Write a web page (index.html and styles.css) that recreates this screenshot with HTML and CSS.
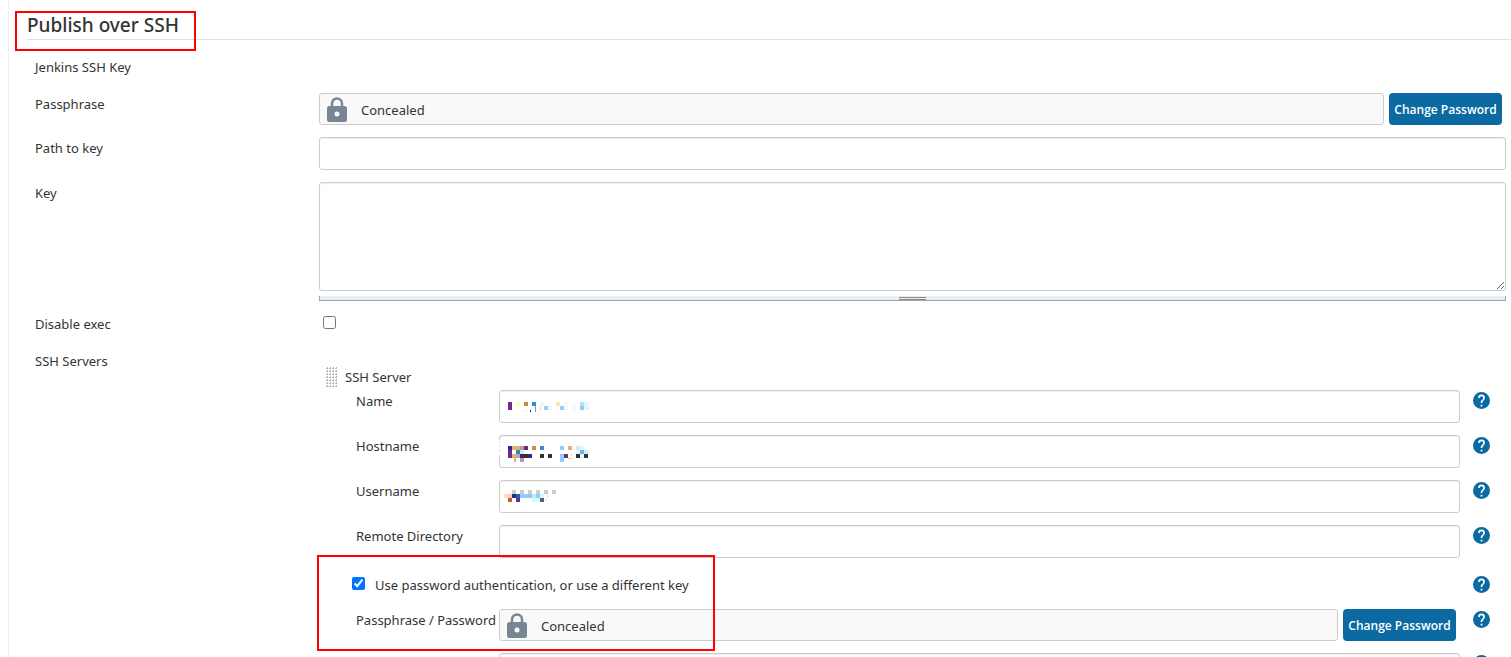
FILE: index.html
```html
<!DOCTYPE html>
<html lang="en">
<head>
    <meta charset="UTF-8">
    <title>Configure System [Jenkins]</title>
    <link rel="stylesheet" href="styles.css">
</head>
<body>
    <!-- Shared icons -->
    <svg class="sprite" aria-hidden="true">
        <symbol id="lock" viewBox="0 0 20 26">
            <path d="M5 10V6.500a5 5 0 0 1 10 0V10" fill="none" stroke="#788594" stroke-width="2.500"/>
            <path fill="#788594" fill-rule="evenodd" d="M2.500 9h15A2.500 2.500 0 0 1 20 11.500v11a2.500 2.500 0 0 1-2.500 2.500h-15A2.500 2.500 0 0 1 0 22.500v-11A2.500 2.500 0 0 1 2.500 9zM10 14.500a2.500 2.500 0 1 0 0 5 2.500 2.500 0 0 0 0-5z"/>
        </symbol>
        <symbol id="help" viewBox="0 0 24 24">
            <path fill="#0b6aa2" d="M12 0a12 12 0 1 0 0 24 12 12 0 0 0 0-24zm1.200 20.400h-2.400V18h2.400v2.400zm2.500-9.300-1.100 1.100c-.9.900-1.400 1.600-1.400 3.400h-2.400V15c0-1.300.5-2.500 1.400-3.400l1.500-1.500c.4-.4.7-1 .7-1.700a2.400 2.400 0 0 0-4.800 0H7.200a4.800 4.800 0 0 1 9.600 0c0 1-.4 2-1.100 2.700z"/>
        </symbol>
    </svg>

    <main class="main-panel">
        <h1 class="section-header">Publish over SSH<span class="highlight highlight-title"></span></h1>

        <form class="form">
            <div class="row">
                <div class="label">Jenkins SSH Key</div>
            </div>
            <div class="row">
                <div class="label">Passphrase</div>
                <div class="secret">
                    <div class="secret-field"><svg class="lock"><use href="#lock"/></svg>Concealed</div>
                    <button type="button" class="change">Change Password</button>
                </div>
            </div>
            <div class="row">
                <label class="label" for="keyPath">Path to key</label>
                <input class="text" type="text" id="keyPath">
            </div>
            <div class="row">
                <label class="label" for="key">Key</label>
                <div class="key-box">
                    <textarea class="text area" id="key"></textarea>
                    <div class="area-handle"><div class="grip"></div></div>
                </div>
            </div>
            <div class="row">
                <label class="label" for="disableExec">Disable exec</label>
                <div><input class="check" type="checkbox" id="disableExec"></div>
            </div>
            <div class="row">
                <div class="label">SSH Servers</div>
                <div class="servers">
                    <div class="server-title">
                        <svg class="drag" width="12" height="21">
                            <pattern id="dots" width="3" height="3" patternUnits="userSpaceOnUse">
                                <path d="M1 0h1v2H0V1h1z" fill="#b4b4b4" shape-rendering="crispEdges"/>
                            </pattern>
                            <rect width="12" height="21" fill="url(#dots)"/>
                        </svg>
                        SSH Server
                    </div>
                    <div class="server">
                        <div class="server-row">
                            <label class="label" for="name">Name</label>
                            <div class="masked">
                                <input class="text" type="text" id="name">
                                <svg class="mosaic" width="100" height="33" shape-rendering="crispEdges">
                                    <path fill="#6b2d8f" d="M9 12h4v8h-4z"/>
                                    <path fill="#ffffc8" d="M17 12h4v4h-4z"/>
                                    <path fill="#ffffe6" d="M17 16h4v4h-4z"/>
                                    <path fill="#d18c33" d="M25 12h4v4h-4z"/>
                                    <path fill="#2e8fd1" d="M33 12h4v4h-4z"/>
                                    <path fill="#1c1c80" d="M31 20h1v2h-1z"/>
                                    <path fill="#60a8c8" d="M36 16h1v6h-1z"/>
                                    <path fill="#ffc890" d="M41 17h1v3h-1z"/>
                                    <path fill="#e0f8ff" d="M41 12h4v4h-4zM85 12h4v8h-4z"/>
                                    <path fill="#90ccff" d="M45 16h4v4h-4zM61 16h4v4h-4zM81 16h4v4h-4z"/>
                                    <path fill="#ffe4b0" d="M57 12h4v4h-4z"/>
                                    <path fill="#b0e4ff" d="M81 12h4v4h-4z"/>
                                    <path fill="#e0e0e0" d="M89 13h1v1h-1zM89 17h1v3h-1zM25 20h1v1h-1zM28 20h1v1h-1z"/>
                                    <path fill="#f8f8f8" d="M49 16h4v4h-4zM65 12h4v8h-4zM73 16h4v4h-4z"/>
                                </svg>
                            </div>
                            <a class="help" href="#" aria-label="Help for Name"><svg><use href="#help"/></svg></a>
                        </div>
                        <div class="server-row">
                            <label class="label" for="hostname">Hostname</label>
                            <div class="masked">
                                <input class="text" type="text" id="hostname">
                                <svg class="mosaic" width="100" height="33" shape-rendering="crispEdges">
                                    <path fill="#fff" d="M0 5h1v2h-1zM0 8h1v3h-1zM0 12h1v3h-1zM0 16h1v4h-1z"/>
                                    <path fill="#302a8c" d="M9 11h4v4h-4zM29 19h4v4h-4z"/>
                                    <path fill="#6b2d8f" d="M9 15h4v8h-4z"/>
                                    <path fill="#e8b070" d="M13 11h8v4h-8zM69 11h4v4h-4zM13 19h4v4h-4zM15 23h2v4h-2z"/>
                                    <path fill="#b896c0" d="M21 11h4v4h-4zM21 23h4v4h-4z"/>
                                    <path fill="#6b2d6b" d="M25 11h4v4h-4zM65 19h4v4h-4z"/>
                                    <path fill="#d18c33" d="M33 11h4v4h-4z"/>
                                    <path fill="#2e8fd1" d="M41 11h4v4h-4z"/>
                                    <path fill="#90ccff" d="M61 11h4v4h-4zM61 19h4v8h-4z"/>
                                    <path fill="#2e90a8" d="M17 15h4v4h-4z"/>
                                    <path fill="#90b0d8" d="M17 19h4v4h-4z"/>
                                    <path fill="#c8ecfc" d="M21 15h4v4h-4zM77 11h4v4h-4zM85 15h4v4h-4z"/>
                                    <path fill="#602030" d="M21 19h4v4h-4z"/>
                                    <path fill="#303030" d="M25 19h4v4h-4zM41 19h4v4h-4zM49 19h4v4h-4zM77 19h4v4h-4zM85 19h4v4h-4z"/>
                                    <path fill="#6ab0f0" d="M81 15h4v4h-4z"/>
                                    <path fill="#e4f8ff" d="M81 11h4v4h-4zM81 19h4v4h-4zM77 15h4v4h-4zM89 15h2v4h-2z"/>
                                    <path fill="#ffffe0" d="M53 19h4v4h-4z"/>
                                    <path fill="#fcc8a0" d="M72 19h1v2h-1zM69 23h4v1h-4z"/>
                                </svg>
                            </div>
                            <a class="help" href="#" aria-label="Help for Hostname"><svg><use href="#help"/></svg></a>
                        </div>
                        <div class="server-row">
                            <label class="label" for="username">Username</label>
                            <div class="masked">
                                <input class="text" type="text" id="username">
                                <svg class="mosaic" width="100" height="33" shape-rendering="crispEdges">
                                    <path fill="#ccc" d="M13 10h4v4h-4zM21 10h4v4h-4zM29 10h4v4h-4zM37 10h4v4h-4zM45 10h4v4h-4zM53 10h4v4h-4z"/>
                                    <path fill="#ffe4b0" d="M5 14h4v4h-4z"/>
                                    <path fill="#f8c8c8" d="M9 14h4v4h-4z"/>
                                    <path fill="#2a2a8c" d="M13 14h4v4h-4z"/>
                                    <path fill="#2060b8" d="M17 14h4v4h-4z"/>
                                    <path fill="#90ccff" d="M21 14h12v4h-12zM37 14h4v4h-4z"/>
                                    <path fill="#b0ecff" d="M33 14h4v4h-4z"/>
                                    <path fill="#d8f8ff" d="M41 14h4v4h-4zM33 18h8v4h-8z"/>
                                    <path fill="#b06830" d="M9 18h4v4h-4z"/>
                                    <path fill="#6b2d8f" d="M17 18h4v4h-4z"/>
                                    <path fill="#606060" d="M41 18h4v4h-4z"/>
                                    <path fill="#d8d8d8" d="M48 15h1v3h-1zM46 19h1v2h-1z"/>
                                </svg>
                            </div>
                            <a class="help" href="#" aria-label="Help for Username"><svg><use href="#help"/></svg></a>
                        </div>
                        <div class="server-row">
                            <label class="label" for="remoteDir">Remote Directory</label>
                            <input class="text" type="text" id="remoteDir">
                            <a class="help" href="#" aria-label="Help for Remote Directory"><svg><use href="#help"/></svg></a>
                        </div>
                        <div class="auth">
                            <div class="server-row auth-toggle">
                                <label class="check-label"><input class="check" type="checkbox" checked>Use password authentication, or use a different key</label>
                                <a class="help" href="#" aria-label="Help for password authentication"><svg><use href="#help"/></svg></a>
                            </div>
                            <div class="server-row">
                                <div class="label">Passphrase / Password</div>
                                <div class="secret">
                                    <div class="secret-field"><svg class="lock"><use href="#lock"/></svg>Concealed</div>
                                    <button type="button" class="change">Change Password</button>
                                </div>
                                <a class="help" href="#" aria-label="Help for Passphrase"><svg><use href="#help"/></svg></a>
                            </div>
                            <span class="highlight highlight-auth"></span>
                        </div>
                        <div class="server-row">
                            <div class="label"></div>
                            <input class="text" type="text" aria-label="Path to key">
                            <a class="help" href="#" aria-label="Help for Path to key"><svg><use href="#help"/></svg></a>
                        </div>
                    </div>
                </div>
            </div>
        </form>
    </main>
</body>
</html>
```
FILE: styles.css
```css
* {
    box-sizing: border-box;
}

body {
    margin: 0;
    font-family: "Noto Sans", "Open Sans", sans-serif;
    font-size: 13px;
    line-height: 22px;
    color: #333;
    background: #fff;
}

.sprite {
    display: none;
}

.main-panel {
    height: 100vh;
    margin-left: 8px;
    padding-left: 18px;
    border-left: 1px solid #eaeff2;
    overflow: hidden;
}

.section-header {
    position: relative;
    height: 40px;
    margin: 0 0 16px;
    padding-top: 10px;
    border-bottom: 1px solid #dee0e2;
    font-size: 19px;
    font-weight: 500;
    line-height: 30px;
}

.form {
    display: grid;
    gap: 12px;
    padding: 0 5px 0 8px;
}

.row {
    display: grid;
    grid-template-columns: 284px minmax(0, 1fr);
    align-items: start;
    min-height: 25px;
}

.label {
    white-space: nowrap;
}

.text {
    display: block;
    width: 100%;
    height: 33px;
    margin: 0;
    padding: 6px;
    border: 1px solid #ccc;
    border-radius: 3px;
    background: #fff;
    box-shadow: inset 0 1px 1px rgba(0, 0, 0, 0.075);
    font: inherit;
    color: inherit;
}

.area {
    height: 109px;
    resize: vertical;
}

.area-handle {
    height: 5px;
    margin-top: 5px;
    padding-top: 1px;
    border: 1px solid #98a8b0;
    border-top: none;
    background: #e8eef1;
}

.grip {
    width: 27px;
    height: 3px;
    margin: 0 auto;
    border-top: 1px solid #888;
    border-bottom: 1px solid #888;
}

.check {
    display: block;
    width: 13px;
    height: 13px;
    margin: 3px 4px;
}

/* Concealed secret with its button */
.secret {
    display: flex;
    gap: 5px;
    padding-right: 4px;
}

.secret-field {
    display: flex;
    flex: 1;
    align-items: center;
    gap: 14px;
    height: 32px;
    padding: 2px 7px 0;
    border: 1px solid #ccc;
    border-radius: 3px;
    background: #f9f9f9;
}

.lock {
    width: 20px;
    height: 26px;
}

.change {
    width: 113px;
    height: 32px;
    padding: 0;
    border: none;
    border-radius: 4px;
    background: #0b6aa2;
    color: #fff;
    font: 600 12px "Open Sans", "Noto Sans", sans-serif;
    white-space: nowrap;
    cursor: pointer;
}

.change:hover {
    background: #095683;
}

/* SSH server block */
.servers {
    padding-top: 16px;
}

.server-title {
    display: flex;
    gap: 7px;
    height: 24px;
    padding-left: 7px;
}

.drag {
    margin-top: 1px;
}

.server {
    display: grid;
    gap: 12px;
    padding-left: 37px;
}

.server-row {
    display: grid;
    grid-template-columns: 143px minmax(0, 1fr) 46px;
    align-items: start;
}

.auth {
    position: relative;
    display: grid;
    gap: 12px;
}

.auth-toggle {
    grid-template-columns: minmax(0, 1fr) 46px;
    height: 27px;
    padding-top: 4px;
}

.check-label {
    display: flex;
    gap: 6px;
    margin-left: -8px;
}

.help {
    padding: 2px 0 0 13px;
    line-height: 0;
}

.help svg {
    width: 17px;
    height: 17px;
}

.masked {
    position: relative;
}

.mosaic {
    position: absolute;
    top: 0;
    left: 0;
    pointer-events: none;
}

/* Red frames */
.highlight {
    position: absolute;
    border: 2px solid #f00;
    pointer-events: none;
}

.highlight-title {
    top: 11px;
    left: -12px;
    width: 181px;
    height: 40px;
}

.highlight-auth {
    top: -15px;
    left: -39px;
    width: 398px;
    height: 96px;
}
```
